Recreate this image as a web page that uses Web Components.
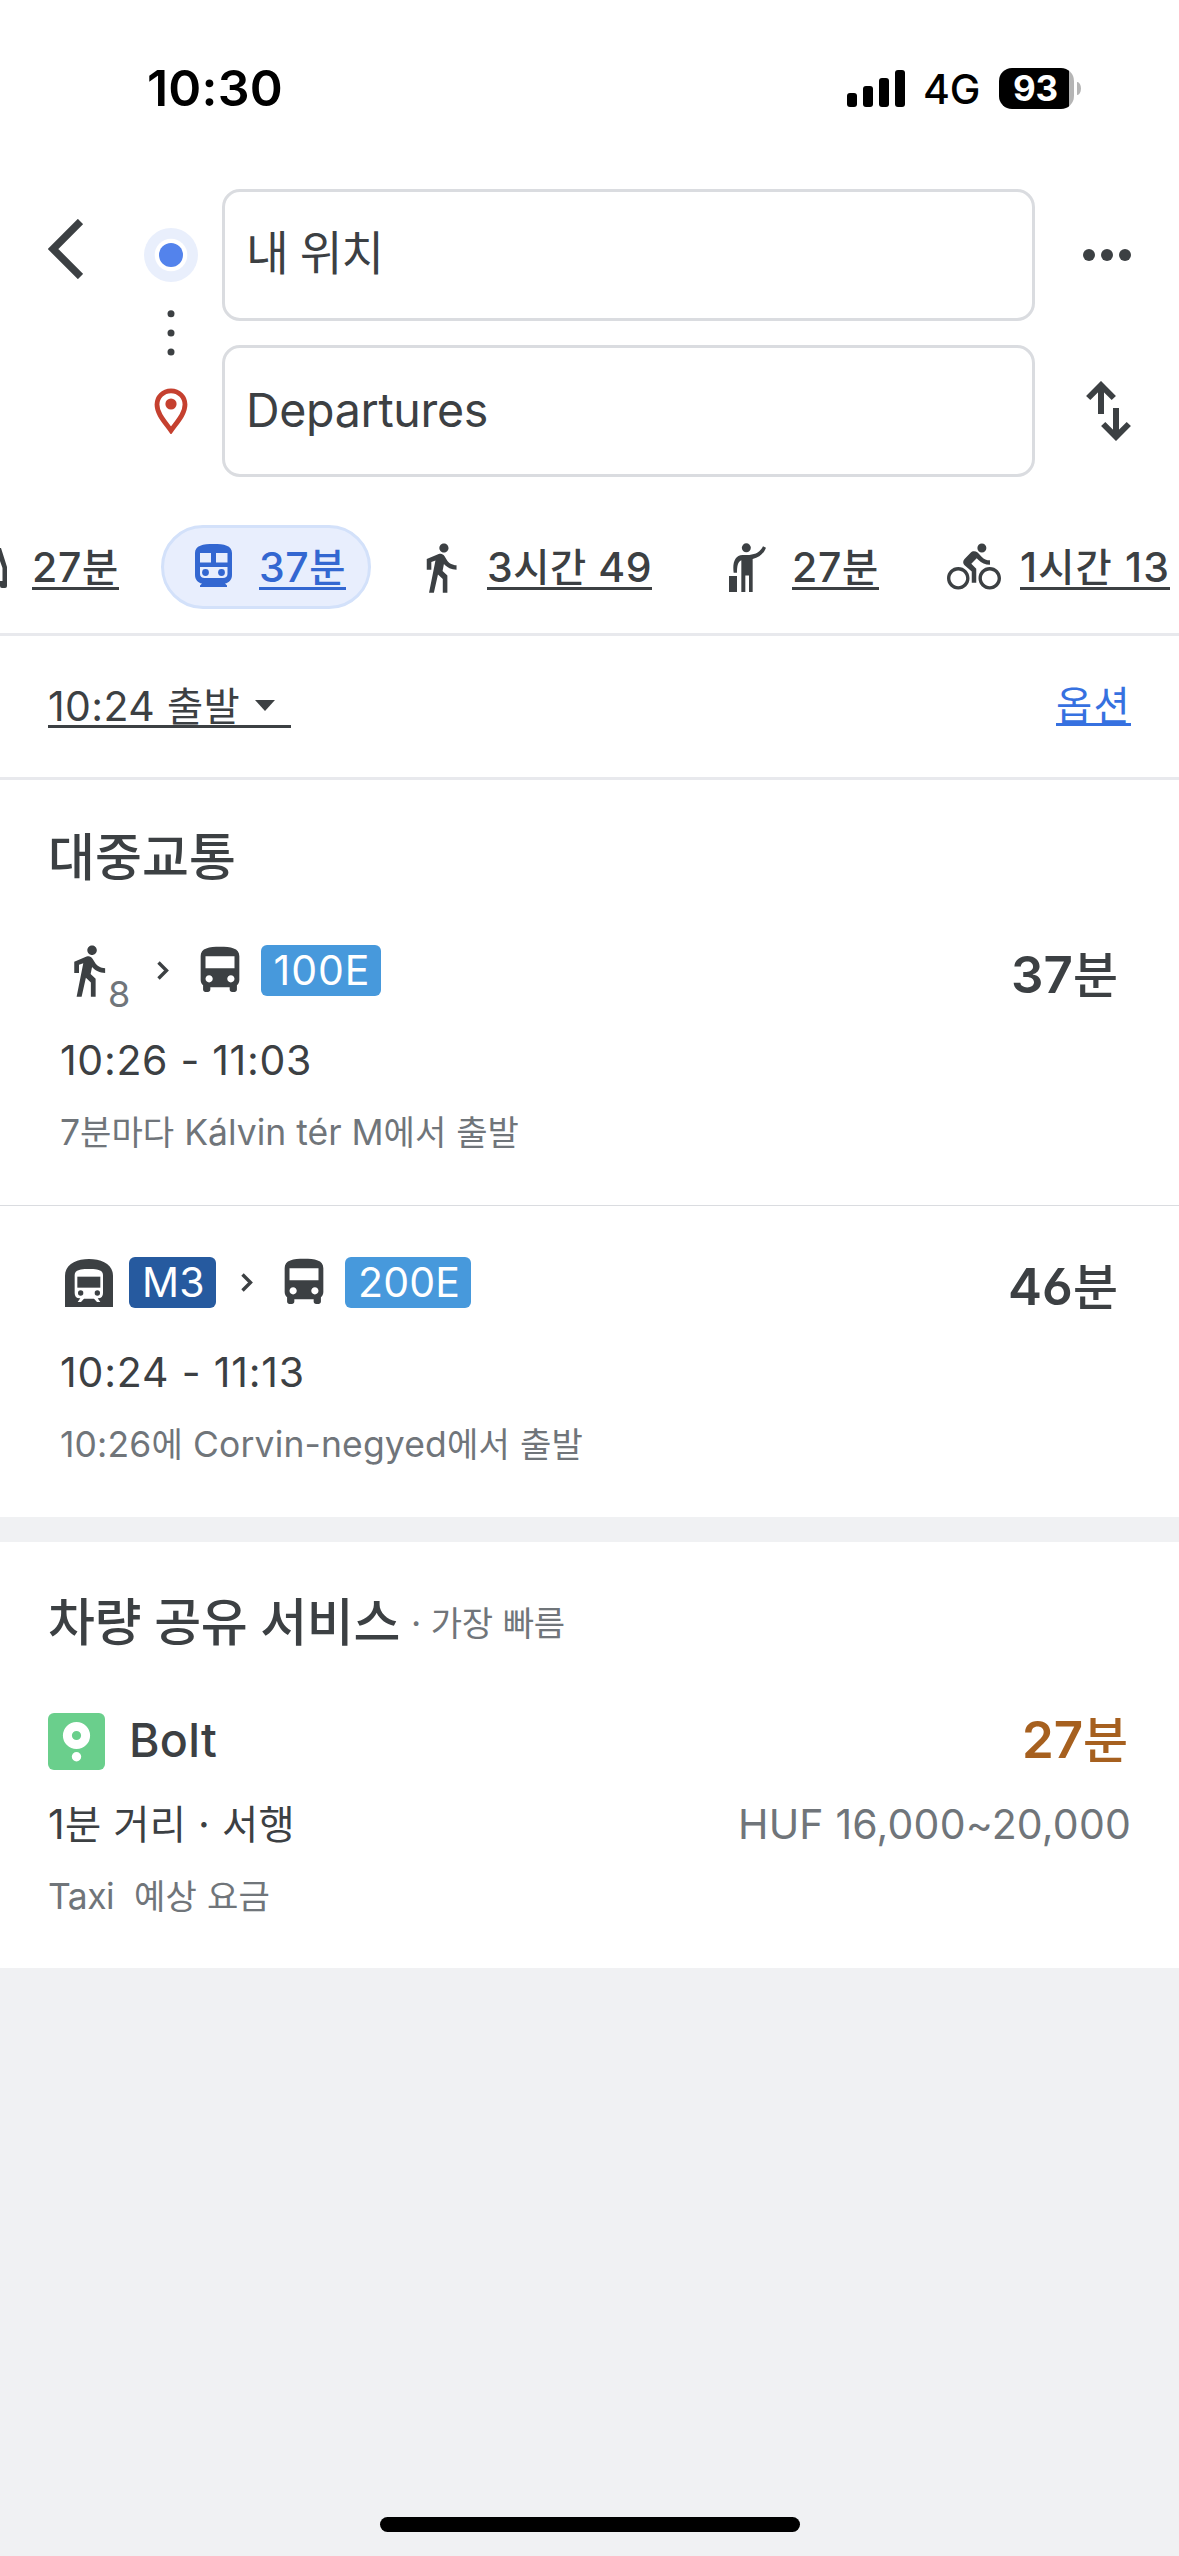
<!DOCTYPE html>
<html lang="ko">
<head>
<meta charset="utf-8">
<title>경로</title>
<style>
  html, body { margin: 0; padding: 0; }
  body {
    width: 1179px; height: 2556px; overflow: hidden; background: #f0f1f3;
    font-family: Inter, "Noto Sans CJK KR", sans-serif; color: #3c4043;
  }
</style>
</head>
<body>
<route-app></route-app>

<script>
const define = (name, html, after) => {
  const tpl = document.createElement('template');
  tpl.innerHTML = html;
  customElements.define(name, class extends HTMLElement {
    connectedCallback() {
      if (this.shadowRoot) return;
      this.attachShadow({ mode: 'open' }).append(tpl.content.cloneNode(true));
      if (after) after(this, this.shadowRoot);
    }
  });
};

/* A single line of text that is tracked to a given advance width. */
define('text-run', `
  <style>
    :host { display: block; flex: none; white-space: nowrap; }
    span { display: inline-block; white-space: pre; }
    i { font-style: normal; line-height: 0; font-size: var(--hangul, .96em); }
    :host([underline]) { border-bottom: 3px solid currentColor; }
    :host([alt]) { font-feature-settings: "cv03", "cv05" 0; }
    :host([alt]) i { font-weight: 500; }
  </style><span></span>`, (el, root) => {
  const span = root.querySelector('span');
  const text = el.getAttribute('text');
  for (const part of text.match(/[\uac00-\ud7a3]+|[^\uac00-\ud7a3]+/g)) {
    if (/[\uac00-\ud7a3]/.test(part)) {
      const i = document.createElement('i');
      i.textContent = part;
      span.append(i);
    } else span.append(part);
  }
  const lh = el.getAttribute('lh') || 40;
  el.style.fontSize = el.getAttribute('size') + 'px';
  el.style.fontWeight = el.getAttribute('weight') || 400;
  el.style.lineHeight = el.style.height = lh + 'px';
  const w = parseFloat(el.getAttribute('w'));
  el.style.width = w + 'px';
  span.style.letterSpacing = (w - span.getBoundingClientRect().width) / text.length + 'px';
});

const ICONS = {
  walk: ['0 0 24 24', '<path d="M13.5 5.5c1.1 0 2-.9 2-2s-.9-2-2-2-2 .9-2 2 .9 2 2 2zM9.8 8.9L7 23h2.1l1.8-8 2.1 2v6h2v-7.5l-2.1-2 .6-3C14.8 12 16.8 13 19 13v-2c-1.9 0-3.5-1-4.3-2.4l-1-1.6c-.4-.6-1-1-1.7-1-.3 0-.5.1-.8.1L6 8.3V13h2V9.6l1.8-.7"/>'],
  bus: ['0 0 24 24', '<path d="M4 16c0 .88.39 1.67 1 2.22V20c0 .55.45 1 1 1h1c.55 0 1-.45 1-1v-1h8v1c0 .55.45 1 1 1h1c.55 0 1-.45 1-1v-1.78c.61-.55 1-1.34 1-2.22V6c0-3.5-3.58-4-8-4s-8 .5-8 4v10zm3.5 1c-.83 0-1.5-.67-1.5-1.5S6.67 14 7.5 14s1.5.67 1.5 1.5S8.33 17 7.5 17zm9 0c-.83 0-1.5-.67-1.5-1.5s.67-1.5 1.5-1.5 1.5.67 1.5 1.5-.67 1.5-1.5 1.5zm1.5-6H6V6h12v5z"/>'],
  bike: ['0 0 24 24', '<path d="M15.5 5.5c1.1 0 2-.9 2-2s-.9-2-2-2-2 .9-2 2 .9 2 2 2zM5 12c-2.8 0-5 2.2-5 5s2.2 5 5 5 5-2.2 5-5-2.2-5-5-5zm0 8.5c-1.9 0-3.5-1.6-3.5-3.5s1.6-3.5 3.5-3.5 3.5 1.6 3.5 3.5-1.6 3.5-3.5 3.5zm5.8-10l2.4-2.4.8.8c1.3 1.3 3 2.1 5.1 2.1V9c-1.5 0-2.7-.6-3.6-1.5l-1.9-1.9c-.5-.4-1-.6-1.6-.6s-1.1.2-1.4.6L7.8 8.4c-.4.4-.6.9-.6 1.4 0 .6.2 1.1.6 1.4L11 14v5h2v-6.2l-2.2-2.3zM19 12c-2.8 0-5 2.2-5 5s2.2 5 5 5 5-2.2 5-5-2.2-5-5-5zm0 8.5c-1.9 0-3.5-1.6-3.5-3.5s1.6-3.5 3.5-3.5 3.5 1.6 3.5 3.5-1.6 3.5-3.5 3.5z"/>'],
  train: ['0 0 37 43', '<path fill-rule="evenodd" d="M18.500 0C8 0 0 1.500 0 9v22c0 4.500 3 8 7 8.500L5 41.500V43h27v-1.500L30 39.500c4-.5 7-4 7-8.500V9C37 1.500 29 0 18.500 0zM5 9h11v9.500H5zM21 9h11.500v9.500H21zM5 23h27.500v7c0 2.500-2 4-4.500 4H9.500C7 34 5 32.500 5 30z"/><circle cx="10.500" cy="28.500" r="3.400"/><circle cx="26.500" cy="28.500" r="3.400"/>'],
  hail: ['27 35 111 148', '<circle cx="79" cy="49.500" r="13.500"/><path d="M27 135h24v48H27zM41 125C37 95 44 72 68 71H88C108 70 121 61 129 45L138 49C131 67 118 79 98 83V183H87V133H76V183H64V87C53 91 51 106 51 125Z"/>'],
  subway: ['26 24 144 144', '<path d="M26 168V74C26 40 60 24 98 24S170 40 170 74V168Z"/><path fill="#fff" d="M55 72C55 56 75 54 98 54S140 56 140 72V126Q140 142 125 142H124L132 153H122L113 143H83L74 153H64L72 142H70Q55 142 55 126Z"/><path d="M63 77H132V110H63Z"/><circle cx="73" cy="126" r="8"/><circle cx="123" cy="126" r="8"/>'],
  car: ['0 0 7 40', '<path fill-rule="evenodd" d="M0 0H1L7 19V38Q7 40 5 40H2Q0 40 0 38V33H2.500V20L0 13Z"/>'],
  chevron: ['0 0 12 19', '<path d="M1.500 1.500L9.500 9.500L1.500 17.500" fill="none" stroke="currentColor" stroke-width="3.400"/>'],
  back: ['0 0 35 60', '<path d="M32.500 2.500L5 30L32.500 57.500" fill="none" stroke="currentColor" stroke-width="7.500"/>'],
  more: ['0 0 48 12', '<circle cx="6" cy="6" r="6"/><circle cx="24" cy="6" r="6"/><circle cx="42" cy="6" r="6"/>'],
  swap: ['0 0 45 60', '<path d="M15 33V5M2.200 17L15 4.200L27.800 17M30 27V55M17.200 43L30 55.800L42.800 43" fill="none" stroke="currentColor" stroke-width="6"/>'],
  rail: ['0 0 54 206', '<circle cx="27" cy="27" r="27" fill="#e9effc"/><circle cx="27" cy="27" r="16.300" fill="#fff"/><circle cx="27" cy="27" r="12" fill="#5383ec"/><circle cx="27" cy="85.700" r="3.500"/><circle cx="27" cy="105" r="3.500"/><circle cx="27" cy="124" r="3.500"/><path d="M27 162.800C19 162.800 13 169 13 176.500C13 186 21 194 27 202.500C33 194 41 186 41 176.500C41 169 35 162.800 27 162.800Z" fill="none" stroke="#c5402f" stroke-width="4.800"/><circle cx="27" cy="176" r="5.600" fill="#c5402f"/>'],
  signal: ['0 0 58 37', '<rect y="23" width="10" height="14" rx="3"/><rect x="16" y="16" width="10" height="21" rx="3"/><rect x="32" y="8" width="10" height="29" rx="3"/><rect x="48" width="10" height="37" rx="3"/>'],
  caret: ['0 0 20 11', '<path d="M0 0H20L10 11Z"/>'],
  bolt: ['0 0 57 57', '<rect width="57" height="57" rx="6" fill="#6acf8c"/><circle cx="28.500" cy="22.500" r="9.100" fill="none" stroke="#fff" stroke-width="9"/><circle cx="28.500" cy="43.700" r="4.700" fill="#fff"/>']
};
define('ui-icon', `<style>:host{display:block;flex:none}svg{display:block;width:100%;height:100%}</style>`, (el, root) => {
  const [box, body] = ICONS[el.getAttribute('name')];
  root.innerHTML += `<svg viewBox="${box}" preserveAspectRatio="none" fill="currentColor">${body}</svg>`;
  el.style.width = el.getAttribute('w') + 'px';
  el.style.height = el.getAttribute('h') + 'px';
});

define('battery-badge', `
  <style>
    :host { display: flex; align-items: center; gap: 3px; flex: none; }
    .body { width: 75px; height: 41px; border-radius: 13px; background: linear-gradient(90deg, #000 70px, #b5b5b5 70px);
      color: #fff; display: flex; align-items: center; justify-content: center; }
    .body text-run { margin-right: 2px; }
    .nub { width: 4px; height: 13px; border-radius: 0 4px 4px 0 / 0 7px 7px 0; background: #b5b5b5; }
  </style>
  <div class="body"><text-run text="93" size="35" weight="700" w="45"></text-run></div><div class="nub"></div>`);

define('status-bar', `
  <style>
    :host { display: flex; align-items: center; height: 176px; box-sizing: border-box; padding: 0 98px 0 147px; color: #000; }
    .right { display: flex; align-items: center; margin-left: auto; }
    .net { margin: 1px 19px 0 18px; }
  </style>
  <text-run text="10:30" size="50" weight="600" w="136"></text-run>
  <div class="right">
    <ui-icon name="signal" w="58" h="37"></ui-icon>
    <text-run class="net" text="4G" size="41" weight="500" w="57"></text-run>
    <battery-badge></battery-badge>
  </div>`);

define('place-field', `
  <style>:host { display: flex; align-items: center; height: 132px; box-sizing: border-box; border: 3px solid #dadce0;
    border-radius: 18px; padding: 0 0 2px 21px; background: #fff; }</style><slot></slot>`);

define('search-header', `
  <style>
    :host { display: flex; padding: 13px 48px 0; }
    .back { margin-top: 30px; }
    .rail { margin: 39px 24px 0 61px; }
    .fields { display: flex; flex-direction: column; gap: 24px; width: 813px; }
    .here { --hangul: 1em; margin-bottom: 2px; }
    .actions { margin-left: auto; display: flex; flex-direction: column; align-items: flex-end; }
    .more { margin-top: 60px; } .swap { margin-top: 120px; }
  </style>
  <ui-icon class="back" name="back" w="35" h="60"></ui-icon>
  <ui-icon class="rail" name="rail" w="54" h="206"></ui-icon>
  <div class="fields">
    <place-field><text-run class="here" text="내 위치" size="46.500" w="137"></text-run></place-field>
    <place-field><text-run text="Departures" size="46.500" w="242"></text-run></place-field>
  </div>
  <div class="actions">
    <ui-icon class="more" name="more" w="48" h="12"></ui-icon>
    <ui-icon class="swap" name="swap" w="45" h="60"></ui-icon>
  </div>`);

define('mode-tab', `
  <style>
    :host { display: flex; align-items: center; flex: none; height: 84px; box-sizing: border-box; }
    :host([selected]) { background: #e8eefd; border: 3px solid #d3e1fa; border-radius: 42px; padding: 0 22px 0 31px; color: #3367d1; }
    ::slotted(text-run) { margin-top: 3px; }
  </style><slot></slot>`);

define('mode-tabs', `
  <style>
    :host { display: flex; margin-top: 48px; padding-bottom: 24px; border-bottom: 3px solid #e8e9ed; overflow: hidden; }
    .t1 { gap: 25px; } .t2 { margin-left: 42px; gap: 27px; } .t3 { margin-left: 42px; gap: 19px; }
    .t4 { margin-left: 77px; gap: 26px; } .t5 { margin-left: 68px; gap: 19px; }
    .car { margin-top: 2px; } .train { margin-top: -3px; }
  </style>
  <mode-tab class="t1"><ui-icon class="car" name="car" w="7" h="40"></ui-icon><text-run underline text="27분" size="41" weight="500" w="87"></text-run></mode-tab>
  <mode-tab class="t2" selected><ui-icon class="train" name="train" w="37" h="43"></ui-icon><text-run underline text="37분" size="41" weight="500" w="87"></text-run></mode-tab>
  <mode-tab class="t3"><ui-icon name="walk" w="55" h="55"></ui-icon><text-run underline text="3시간 49" size="41" weight="500" w="165"></text-run></mode-tab>
  <mode-tab class="t4"><ui-icon name="hail" w="37" h="49"></ui-icon><text-run underline text="27분" size="41" weight="500" w="87"></text-run></mode-tab>
  <mode-tab class="t5"><ui-icon name="bike" w="54" h="54"></ui-icon><text-run underline text="1시간 13" size="41" weight="500" w="150"></text-run></mode-tab>`);

define('filter-bar', `
  <style>
    :host { display: flex; justify-content: space-between; align-items: flex-start; height: 141px; padding: 0 48px; border-bottom: 3px solid #e8e9ed; }
    .when { display: flex; align-items: center; height: 39px; margin-top: 50px; width: 243px; border-bottom: 3px solid #3c4043; }
    .caret { margin-left: 15px; }
    .opt { margin-top: 52px; color: #3671e0; }
  </style>
  <div class="when"><text-run text="10:24 출발" size="41" lh="38" w="192"></text-run><ui-icon class="caret" name="caret" w="20" h="11"></ui-icon></div>
  <text-run class="opt" underline text="옵션" size="41" lh="35" w="75"></text-run>`);

define('line-badge', `
  <style>:host { display: flex; align-items: center; justify-content: center; height: 51px; border-radius: 6px; background: #4799dc; color: #fff; flex: none; }
  :host([metro]) { background: #265a9f; }
  ::slotted(text-run) { margin: -1px 0 0 2px; }</style><slot></slot>`);

define('trip-card', `
  <style>
    :host { display: block; height: 312px; box-sizing: border-box; border-top: 1px solid var(--rule, transparent); padding: 51px 61px 0 60px; }
    .legs { display: flex; align-items: center; height: 51px; }
    .time { margin-top: 43.500px; } .note { margin-top: 33px; color: #70757a; }
    .dur { display: block; margin: 9px 0 0 auto; }
  </style>
  <div class="legs"><slot name="leg"></slot><slot class="dur" name="duration"></slot></div>
  <div class="time"><slot name="time"></slot></div>
  <div class="note"><slot name="note"></slot></div>`);

define('transit-section', `
  <style>
    :host { display: block; background: #fff; padding-top: 48px; height: 689px; }
    .title { margin: 0 0 5px 48px; --hangul: 1.02em; }
    .second { --rule: #dadce0; }
    .eight { align-self: flex-end; margin: 0 0 -17.500px -9px; color: #70757a; }
  </style>
  <text-run class="title" text="대중교통" size="50" weight="500" lh="60" w="188"></text-run>
  <trip-card>
    <ui-icon slot="leg" name="walk" w="57" h="57"></ui-icon>
    <text-run slot="leg" class="eight" text="8" size="36" w="24"></text-run>
    <ui-icon slot="leg" name="chevron" w="12" h="19" style="margin-left:25px"></ui-icon>
    <ui-icon slot="leg" name="bus" w="58" h="57" style="margin-left:22px"></ui-icon>
    <line-badge slot="leg" style="width:120px;margin-left:12px"><text-run text="100E" size="41" w="97"></text-run></line-badge>
    <text-run slot="duration" alt text="37분" size="51" weight="600" w="107"></text-run>
    <text-run slot="time" text="10:26 - 11:03" size="41" w="252"></text-run>
    <text-run slot="note" text="7분마다 Kálvin tér M에서 출발" size="35.500" w="459"></text-run>
  </trip-card>
  <trip-card class="second">
    <ui-icon slot="leg" name="subway" w="48" h="48" style="margin-left:5px"></ui-icon>
    <line-badge slot="leg" metro style="width:87px;margin-left:16px"><text-run text="M3" size="41" w="63"></text-run></line-badge>
    <ui-icon slot="leg" name="chevron" w="12" h="19" style="margin-left:25px"></ui-icon>
    <ui-icon slot="leg" name="bus" w="58" h="57" style="margin-left:22px"></ui-icon>
    <line-badge slot="leg" style="width:126px;margin-left:12px"><text-run text="200E" size="41" w="102"></text-run></line-badge>
    <text-run slot="duration" alt text="46분" size="51" weight="600" w="110"></text-run>
    <text-run slot="time" text="10:24 - 11:13" size="41" w="245"></text-run>
    <text-run slot="note" text="10:26에 Corvin-negyed에서 출발" size="35.500" w="523"></text-run>
  </trip-card>`);

define('ride-section', `
  <style>
    :host { display: block; background: #fff; margin-top: 25px; height: 426px; box-sizing: border-box; padding: 51px 48px 0; }
    .row { display: flex; align-items: center; }
    .title { --hangul: 1.02em; }
    .tag { margin: 1px 0 0 11px; color: #70757a; }
    .brand { margin-top: 60px; height: 57px; }
    .name { margin: -3px 0 0 24px; }
    .mins { margin: -3px 3px 0 auto; color: #a6601f; }
    .info { margin-top: 34px; }
    .price { margin-left: auto; color: #70757a; }
    .note { margin-top: 33px; color: #70757a; gap: 20px; }
  </style>
  <div class="row"><text-run class="title" text="차량 공유 서비스" size="50" weight="500" lh="60" w="352"></text-run>
    <text-run class="tag" text="· 가장 빠름" size="35.500" w="154"></text-run></div>
  <div class="row brand"><ui-icon name="bolt" w="57" h="57"></ui-icon>
    <text-run class="name" text="Bolt" size="46.500" weight="500" w="88"></text-run>
    <text-run class="mins" alt text="27분" size="51" weight="600" w="106"></text-run></div>
  <div class="row info"><text-run text="1분 거리 · 서행" size="41" w="247"></text-run>
    <text-run class="price" text="HUF 16,000~20,000" size="41" w="393"></text-run></div>
  <div class="row note"><text-run text="Taxi" size="35.500" w="66"></text-run><text-run text="예상 요금" size="35.500" w="136"></text-run></div>`);

define('route-app', `
  <style>
    :host { display: flex; flex-direction: column; height: 2556px; }
    .top { background: #fff; }
    .home { width: 420px; height: 15px; border-radius: 8px; background: #000; margin: auto auto 24px 380px; }
  </style>
  <div class="top"><status-bar></status-bar><search-header></search-header><mode-tabs></mode-tabs><filter-bar></filter-bar></div>
  <transit-section></transit-section>
  <ride-section></ride-section>
  <div class="home"></div>`);
</script>
</body>
</html>
